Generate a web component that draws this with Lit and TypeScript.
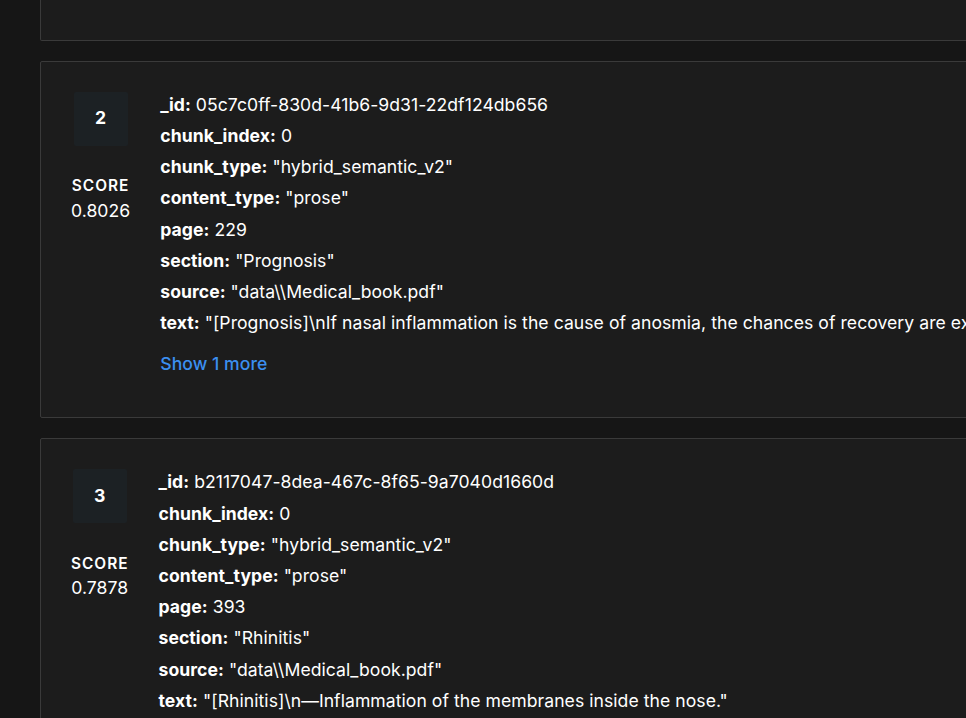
import { LitElement, html, css } from "lit";
import { customElement } from "lit/decorators.js";

interface Hit {
  rank: number;
  score: string;
  fields: [string, string][];
  more?: string;
}

const HITS: Hit[] = [
  {
    rank: 2,
    score: "0.8026",
    fields: [
      ["_id", "05c7c0ff-830d-41b6-9d31-22df124db656"],
      ["chunk_index", "0"],
      ["chunk_type", '"hybrid_semantic_v2"'],
      ["content_type", '"prose"'],
      ["page", "229"],
      ["section", '"Prognosis"'],
      ["source", '"data\\\\Medical_book.pdf"'],
      ["text", '"[Prognosis]\\nIf nasal inflammation is the cause of anosmia, the chances of recovery are excellent once the inflammation is treated."'],
    ],
    more: "Show 1 more",
  },
  {
    rank: 3,
    score: "0.7878",
    fields: [
      ["_id", "b2117047-8dea-467c-8f65-9a7040d1660d"],
      ["chunk_index", "0"],
      ["chunk_type", '"hybrid_semantic_v2"'],
      ["content_type", '"prose"'],
      ["page", "393"],
      ["section", '"Rhinitis"'],
      ["source", '"data\\\\Medical_book.pdf"'],
      ["text", '"[Rhinitis]\\n—Inflammation of the membranes inside the nose."'],
    ],
  },
];

@customElement("app-root")
export class AppRoot extends LitElement {
  static styles = css`
    :host {
      display: block;
      height: 718px;
      overflow: hidden;
      background: #161616;
      font-family: Inter, "Liberation Sans", sans-serif;
      font-size: 17.6px;
      line-height: 26.4px;
      letter-spacing: 0.045px;
      color: #fff;
    }
    .list {
      display: flex;
      flex-direction: column;
      gap: 20px;
      padding-left: 40px;
      width: 1400px;
    }
    .card {
      display: flex;
      gap: 30px;
      padding: 30px;
      background: #1c1c1c;
      border: 1px solid #3a3a3a;
      border-radius: 2px;
    }
    .card.cut {
      height: 40.7px;
      box-sizing: border-box;
      padding: 0;
      border-top: none;
      border-radius: 0 0 2px 2px;
    }
    .side {
      display: flex;
      flex-direction: column;
      align-items: center;
    }
    .rank {
      width: 54px;
      height: 54px;
      display: flex;
      align-items: center;
      justify-content: center;
      background: #1c2124;
      border-radius: 2px;
      font-weight: 700;
    }
    .label {
      margin-top: 28.5px;
      font-size: 15.4px;
      line-height: 23px;
      font-weight: 600;
      letter-spacing: 1px;
    }
    .score {
      margin-top: 0.5px;
    }
    .fields {
      display: flex;
      flex-direction: column;
    }
    .row {
      margin-bottom: 4.8px;
      white-space: nowrap;
    }
    .row b {
      font-weight: 700;
    }
    .more {
      margin: 9.3px 0 10.3px;
      font-weight: 500;
      color: #3b8ff0;
    }
  `;

  renderHit(hit: Hit) {
    return html`
      <div class="card">
        <div class="side">
          <div class="rank">${hit.rank}</div>
          <div class="label">SCORE</div>
          <div class="score">${hit.score}</div>
        </div>
        <div class="fields">
          ${hit.fields.map(
            ([k, v]) => html`<div class="row"><b>${k}:</b> ${v}</div>`
          )}
          ${hit.more ? html`<div class="more">${hit.more}</div>` : ""}
        </div>
      </div>
    `;
  }

  render() {
    return html`
      <div class="list">
        <div class="card cut"></div>
        ${HITS.map((h) => this.renderHit(h))}
      </div>
    `;
  }
}
